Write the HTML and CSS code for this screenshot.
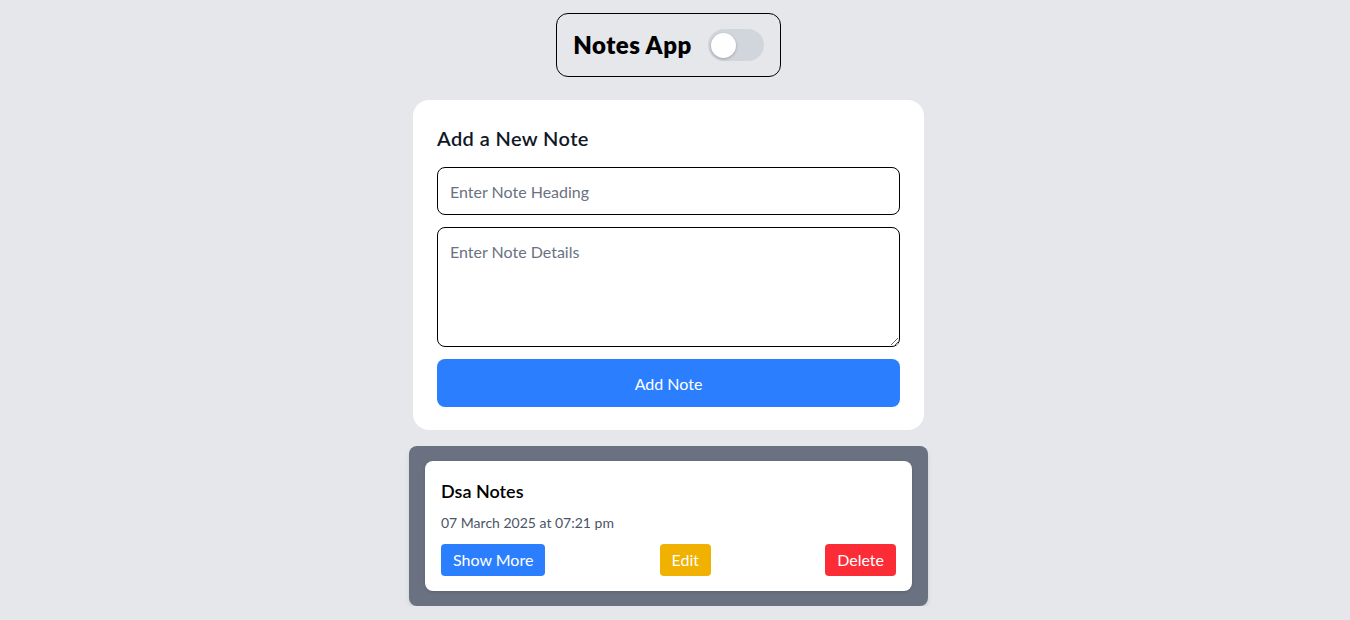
FILE: index.html
```html
<!DOCTYPE html>
<html lang="en">
<head>
<meta charset="utf-8">
<title>Notes App</title>
<link rel="stylesheet" href="styles.css">
</head>
<body>
<div class="page">
  <header class="app-header">
    <h1 class="app-title">Notes App</h1>
    <div class="toggle"><span class="toggle-knob"></span></div>
  </header>

  <section class="form-card">
    <h2 class="form-title">Add a New Note</h2>
    <input class="field" type="text" placeholder="Enter Note Heading">
    <textarea class="field area" placeholder="Enter Note Details"></textarea>
    <button class="add-btn">Add Note</button>
  </section>

  <section class="notes">
    <article class="note">
      <h3 class="note-title">Dsa Notes</h3>
      <p class="note-date">07 March 2025 at 07:21 pm</p>
      <div class="note-actions">
        <button class="btn btn-blue">Show More</button>
        <button class="btn btn-yellow">Edit</button>
        <button class="btn btn-red">Delete</button>
      </div>
    </article>
  </section>
</div>
</body>
</html>
```

FILE: styles.css
```css
* { box-sizing: border-box; }
html, body { margin: 0; padding: 0; }
body {
  background: #e5e7eb;
  font-family: Lato, "Open Sans", sans-serif;
  color: #101828;
  overflow: hidden;
}
.page {
  width: 1337px;
  padding-top: 13px;
  display: flex;
  flex-direction: column;
  align-items: center;
}
.app-header {
  display: flex;
  align-items: center;
  gap: 16px;
  height: 64px;
  padding: 0 16px;
  border: 1px solid #000;
  border-radius: 12px;
}
.app-title {
  margin: 0;
  font-size: 24px;
  line-height: 32px;
  font-weight: 800;
  letter-spacing: 0.02em;
  color: #000;
}
.toggle {
  width: 56px;
  height: 32px;
  border-radius: 16px;
  background: #d1d5dc;
  display: flex;
  align-items: center;
  padding-left: 3px;
}
.toggle-knob {
  width: 25px;
  height: 25px;
  border-radius: 50%;
  background: #fff;
  box-shadow: 0 1px 3px rgba(0,0,0,0.25);
}
.form-card {
  margin-top: 23px;
  width: 511px;
  background: #fff;
  border-radius: 16px;
  padding: 24px 24px 23px;
  display: flex;
  flex-direction: column;
}
.form-title {
  margin: 0 0 15px;
  font-size: 20px;
  line-height: 28px;
  font-weight: 600;
  letter-spacing: 0.02em;
  color: #101828;
}
.field {
  display: block;
  width: 100%;
  height: 48px;
  border: 1px solid #000;
  border-radius: 8px;
  padding: 12px;
  font-family: inherit;
  font-size: 16px;
  line-height: 24px;
  color: #101828;
  background: #fff;
  margin: 0 0 12px;
  outline: none;
}
.field::placeholder { color: #6a7282; }
.area {
  height: 120px;
  resize: vertical;
}
.add-btn {
  height: 48px;
  border: 0;
  border-radius: 8px;
  background: #2b7fff;
  color: #fff;
  font-family: inherit;
  font-size: 16px;
  cursor: pointer;
}
.notes {
  margin-top: 16px;
  width: 519px;
  background: #6a7282;
  border-radius: 8px;
  padding: 15px 16px;
  box-shadow: 0 4px 6px -1px rgba(0,0,0,0.1), 0 2px 4px -2px rgba(0,0,0,0.1);
}
.note {
  background: #fff;
  border-radius: 8px;
  padding: 16px 16px 15px;
  box-shadow: 0 1px 3px rgba(0,0,0,0.15);
}
.note-title {
  margin: 0 0 8px;
  font-size: 18px;
  line-height: 28px;
  font-weight: 600;
  color: #000;
}
.note-date {
  margin: 0 0 11px;
  font-size: 14px;
  line-height: 20px;
  color: #4a5565;
}
.note-actions {
  display: flex;
  justify-content: space-between;
}
.btn {
  height: 32px;
  border: 0;
  border-radius: 4px;
  padding: 0 12px;
  color: #fff;
  font-family: inherit;
  font-size: 16px;
  line-height: 24px;
}
.btn-blue { background: #2b7fff; }
.btn-yellow { background: #f0b100; }
.btn-red { background: #fb2c36; }
```
